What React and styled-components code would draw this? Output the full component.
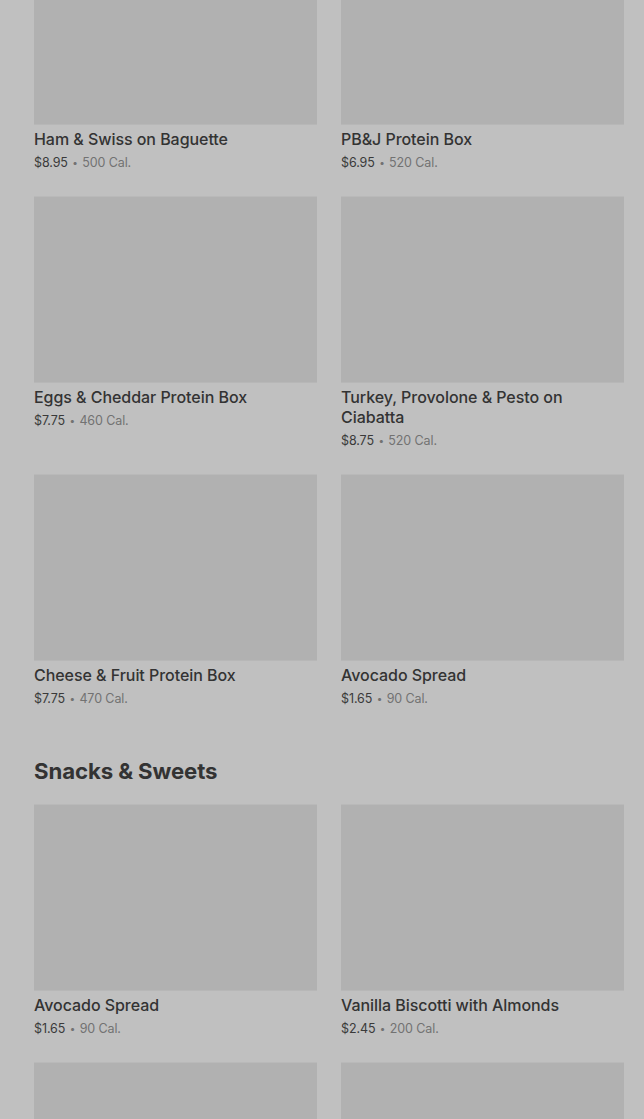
import React from "react";
import styled, { createGlobalStyle } from "styled-components";

const GlobalStyle = createGlobalStyle`
  html, body {
    margin: 0;
    padding: 0;
    background: #c0c0c0;
    overflow: hidden;
  }
  body {
    font-family: Inter, "Liberation Sans", sans-serif;
    -webkit-font-smoothing: antialiased;
  }
`;

const Page = styled.div`
  width: 644px;
  height: 1119px;
  overflow: hidden;
  background: #c0c0c0;
`;

// page is scrolled a bit, first row's picture is cut off at the top
const Scroller = styled.div`
  margin-top: -62px;
  padding: 0 20px 0 34px;
`;

const Section = styled.section`
  margin-bottom: ${(p) => p.gap || 0}px;
`;

const SectionTitle = styled.h2`
  margin: 0 0 19px;
  font-size: 22.2px;
  line-height: 28px;
  font-weight: 700;
  color: #333;
  letter-spacing: -0.1px;
`;

const Grid = styled.div`
  display: grid;
  grid-template-columns: 283px 283px;
  column-gap: 24px;
  row-gap: 24px;
`;

const Card = styled.div`
  display: flex;
  flex-direction: column;
`;

const Picture = styled.div`
  height: 187px;
  background: #b1b1b1;
  border-top: 1px solid #b9b9b9;
  border-bottom: 1px solid #b7b7b7;
  box-sizing: border-box;
`;

const Name = styled.div`
  margin-top: 4px;
  font-size: 16px;
  line-height: 20px;
  font-weight: 500;
  color: #333;
  letter-spacing: -0.05px;
`;

const Meta = styled.div`
  margin-top: 4px;
  height: 19px;
  font-size: 12.5px;
  line-height: 19px;
  color: #727272;
  letter-spacing: -0.1px;
`;

const Price = styled.span`
  color: #3a3a3a;
`;

const Dot = styled.span`
  display: inline-block;
  font-size: 10px;
  margin: 0 1px;
  vertical-align: 1px;
`;

const Item = ({ name, price, cal }) => (
  <Card>
    <Picture />
    <Name>{name}</Name>
    <Meta>
      <Price>{price}</Price> <Dot>•</Dot> {cal} Cal.
    </Meta>
  </Card>
);

const main = [
  { name: "Ham & Swiss on Baguette", price: "$8.95", cal: 500 },
  { name: "PB&J Protein Box", price: "$6.95", cal: 520 },
  { name: "Eggs & Cheddar Protein Box", price: "$7.75", cal: 460 },
  { name: "Turkey, Provolone & Pesto on Ciabatta", price: "$8.75", cal: 520 },
  { name: "Cheese & Fruit Protein Box", price: "$7.75", cal: 470 },
  { name: "Avocado Spread", price: "$1.65", cal: 90 },
];

const snacks = [
  { name: "Avocado Spread", price: "$1.65", cal: 90 },
  { name: "Vanilla Biscotti with Almonds", price: "$2.45", cal: 200 },
];

export default function App() {
  return (
    <Page>
      <GlobalStyle />
      <Scroller>
        <Section gap={49}>
          <Grid>
            {main.map((it, i) => (
              <Item key={i} {...it} />
            ))}
          </Grid>
        </Section>
        <Section>
          <SectionTitle>Snacks &amp; Sweets</SectionTitle>
          <Grid>
            {snacks.map((it, i) => (
              <Item key={i} {...it} />
            ))}
            <Picture />
            <Picture />
          </Grid>
        </Section>
      </Scroller>
    </Page>
  );
}
